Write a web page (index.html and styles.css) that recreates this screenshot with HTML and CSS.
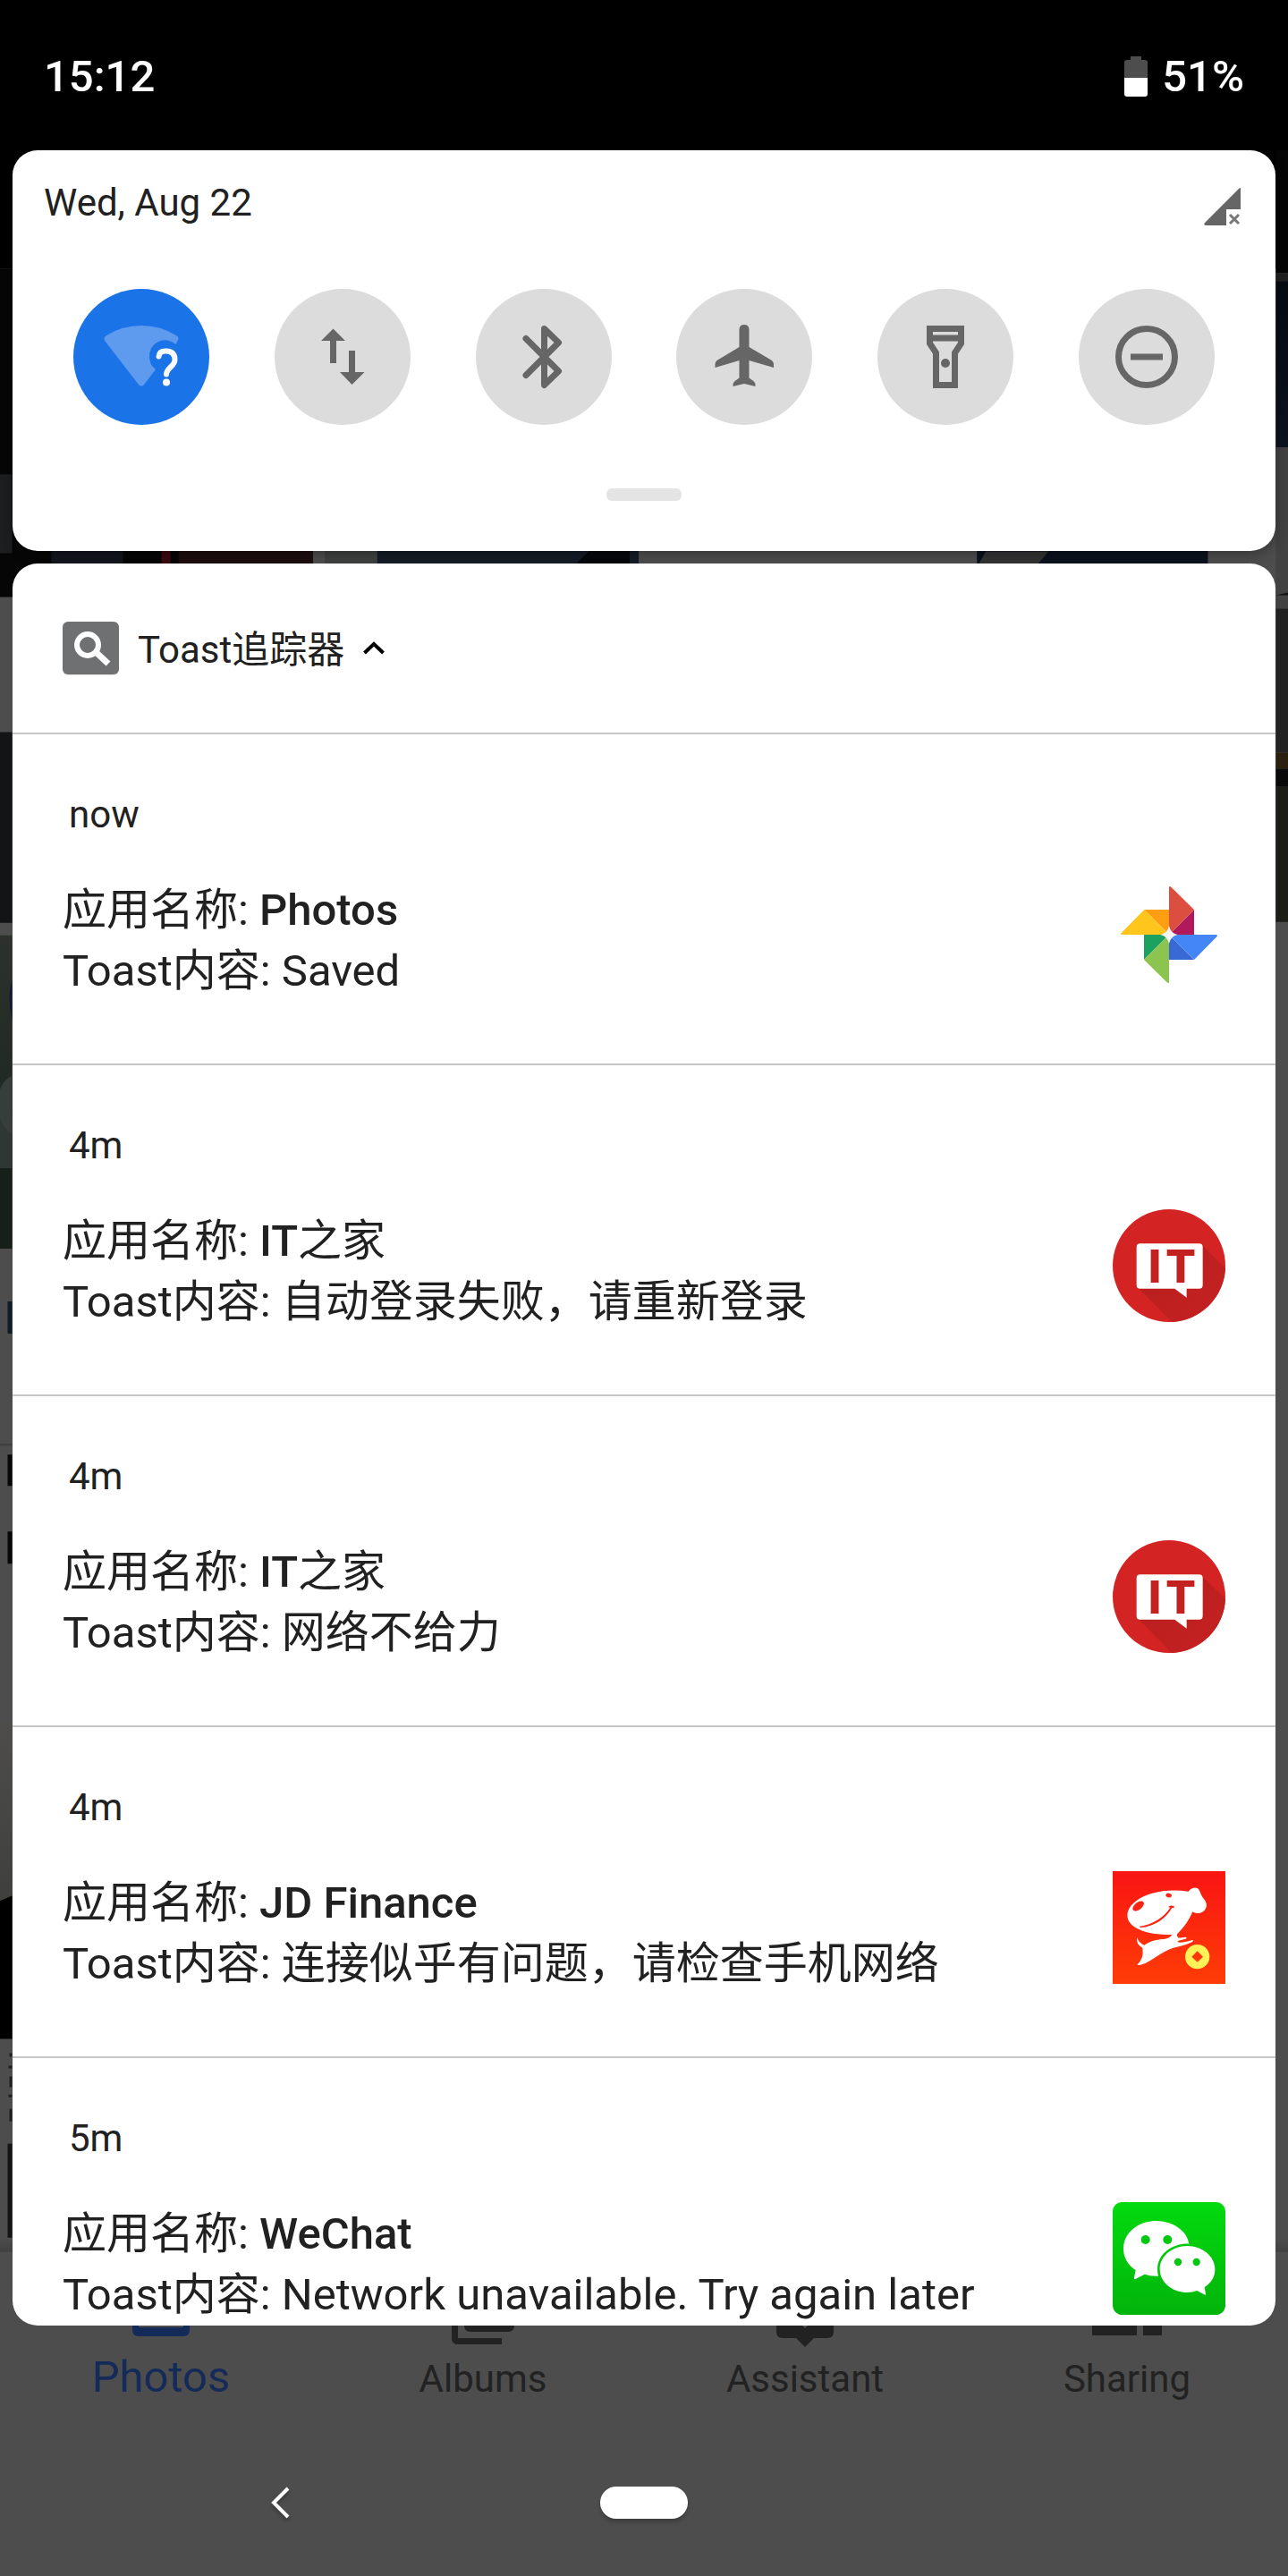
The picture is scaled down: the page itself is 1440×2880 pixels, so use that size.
FILE: index.html
```html
<!DOCTYPE html>
<html lang="zh-CN">
<head>
<meta charset="utf-8">
<meta name="viewport" content="width=device-width, initial-scale=1">
<title>Notifications</title>
<link rel="stylesheet" href="styles.css">
</head>
<body>
<div class="screen">
  <svg class="backdrop" viewBox="0 0 1440 2880" preserveAspectRatio="xMidYMin slice" aria-hidden="true">
    <defs>
      <linearGradient id="hill" x1="0" y1="0" x2="0" y2="1"><stop offset="0" stop-color="#2c322b"/><stop offset="1" stop-color="#1c2420"/></linearGradient>
      <linearGradient id="haze" x1="0" y1="0" x2="0" y2="1"><stop offset="0" stop-color="#4d4c49"/><stop offset="1" stop-color="#3f403c"/></linearGradient>
      <linearGradient id="sky" x1="0" y1="0" x2="0" y2="1"><stop offset="0" stop-color="#060a12"/><stop offset="1" stop-color="#0c1320"/></linearGradient>
      <linearGradient id="edge" x1="0" y1="0" x2="0" y2="1"><stop offset="0" stop-color="#4d4d4d"/><stop offset="1" stop-color="#404040"/></linearGradient>
    </defs>
    <path fill="#4d4d4d" d="M0 0h1440v2880H0z"/>
    <path fill="#000" d="M0 0h1440v300H0z"/>
    <path fill="#060606" d="M0 300h350v367H0z"/>
    <path fill="#1c1e20" d="M0 530h14v88H0z"/>
    <path fill="#12151c" d="M58 600h80v30H58z"/><path fill="#1d0e0e" d="M200 600h150v30H200z"/><path fill="#3c0810" d="M181 600h10v30h-10z"/>
    <path fill="#141c26" d="M364 300h350v330H364z"/><path fill="#3f4040" d="M364 600h58v30h-58z"/><path fill="#05070a" d="M644 630l20-20h40v20z"/>
    <path fill="#0b121e" d="M1092 600h258v30h-258z"/><path fill="#333" d="M1102 616h70l-12 14h-66z"/>
    <path fill="#050505" d="M1426 168h14v137h-14z"/>
    <path fill="#202020" d="M1426 305h14v9h-14z"/>
    <path fill="url(#sky)" d="M1426 314h14v186h-14z"/>
    <path fill="#424242" d="M1426 500h14v180h-14z"/><path fill="#111" d="M1426 665l14-3v3z"/>
    <path fill="#222" d="M1426 680h14v161h-14z"/><path fill="#2b200e" d="M1426 841h14v18h-14z"/><path fill="#090909" d="M1426 859h14v20h-14z"/><path fill="#1b1d16" d="M1426 879h14v151h-14z"/>
    <path fill="#121416" d="M0 818h14v213H0z"/>
    <path fill="url(#hill)" d="M0 1045h14v260H0z"/><path fill="#12183a" d="M14 1094q-6 20 0 46z"/><path fill="#373d3a" d="M0 1218q4-12 14-16v66q-12-8-14-20z"/>
    <path fill="#303633" d="M0 1250q6 12 14 18v37H0z"/><path fill="#162019" d="M0 1305h14v90H0z"/>
    <path fill="#0f1c2a" d="M9 1454h5v36H9z"/><path fill="#3f3f3f" d="M0 1613h14v2H0z"/><path fill="#080808" d="M9 1625h5v35H9zM9 1711h5v36H9z"/>
    <path fill="url(#haze)" d="M0 1925h14v200H0z"/><path fill="#000" d="M0 2124l14-6v160H0z"/>
    <path fill="#202020" d="M11 2294h3v4h-3zM10 2308h4v3h-4zM11 2320h3v12h-3zM10 2340h4v3h-4zM11 2356h3v14h-3z"/><path fill="#151515" d="M9 2395h5v118H9z"/>
    <path fill="url(#edge)" d="M0 2500h1440v16H0z"/>
  </svg>

  <header class="status">
    <time class="clock">15:12</time>
    <div class="battery">
      <svg width="26" height="45" viewBox="0 0 26 45" aria-hidden="true"><path fill="#4d4d4d" d="M7 0h12v4h4q3 0 3 3v17H0V7q0-3 3-3h4z"/><path fill="#fff" d="M0 24h26v18q0 3-3 3H3q-3 0-3-3z"/></svg>
      <span>51%</span>
    </div>
  </header>

  <main class="shade">
    <section class="card quick" aria-label="Quick settings">
      <div class="quick-head">
        <span class="date">Wed, Aug 22</span>
        <svg width="42" height="42" viewBox="0 0 42 42" aria-hidden="true"><path fill="#666" d="M41 0v24H25v18H3q-5 0-1-4L39 1q1-1 2-1z"/><path stroke="#777" stroke-width="3" d="M29 30l10 10M39 30L29 40"/></svg>
      </div>
      <div class="toggles">
        <button class="toggle toggle-on" type="button" aria-label="Wi-Fi">
          <svg viewBox="0 0 84 84"><path fill="#5e9bef" d="M1.500 24.500Q-1 20 3 18Q21 7 42 7T81 18Q85 20 82.500 24L80.500 28A17.500 17.500 0 0 0 51 42Q51 51 58 56L45 73Q42 76 39 73z"/><path fill="none" stroke="#fafafa" stroke-width="6" stroke-linecap="round" d="M61.500 41.500Q62 35 70 35.500Q79.500 36 79.500 45C79.500 53 70 54 70 61.500"/><circle cx="70" cy="70.500" r="4" fill="#fafafa"/></svg>
        </button>
        <button class="toggle" type="button" aria-label="Mobile data">
          <svg viewBox="0 0 84 84"><path fill="#666" d="M31.500 10.500L45 24H35v25h-7V24H18zM49 35h7v24h10.500L52.500 73 39 59h10z"/></svg>
        </button>
        <button class="toggle" type="button" aria-label="Bluetooth">
          <svg viewBox="0 0 84 84"><path fill="none" stroke="#666" stroke-width="7" stroke-linecap="round" stroke-linejoin="round" d="M22 21.500L58.500 58 42.500 73.500v-63L58.500 26 22 62.500"/></svg>
        </button>
        <button class="toggle" type="button" aria-label="Airplane mode">
          <svg viewBox="0 0 84 84"><path fill="#666" d="M36.500 11Q37 6 42 6t5.500 5v20L73 46q2 2 2 4v4L47.500 46v19.500l5.500 4q2 2 1.500 5.500L42 72l-12.500 3q-.5-3.500 1.500-5.500l5.500-4V46L9.500 54v-4q0-2 2-4L36.500 31z"/></svg>
        </button>
        <button class="toggle" type="button" aria-label="Flashlight">
          <svg viewBox="0 0 84 84"><path fill="none" stroke="#666" stroke-width="7" d="M24.500 10.500h35v16.500L52.500 37.500v36h-21v-36L24.500 27zM24.500 21h35"/><circle cx="42" cy="49" r="5" fill="#666"/></svg>
        </button>
        <button class="toggle" type="button" aria-label="Do not disturb">
          <svg viewBox="0 0 84 84"><circle cx="42" cy="42" r="31.500" fill="none" stroke="#666" stroke-width="7"/><path fill="#666" d="M24 38.500h36v7H24z"/></svg>
        </button>
      </div>
      <div class="handle"></div>
    </section>

    <section class="card feed" aria-label="Notifications">
      <div class="feed-head">
        <svg width="63" height="63" viewBox="0 0 63 63" aria-hidden="true"><rect y="3" width="63" height="59" rx="6" fill="#e2e2e2"/><rect y="2" width="63" height="59" rx="6" fill="#6f7072"/><circle cx="28" cy="28" r="12" fill="none" stroke="#fff" stroke-width="6"/><path stroke="#fff" stroke-width="7" d="M36 35l15 14"/></svg>
        <span class="source">Toast追踪器</span>
        <svg class="chevron" width="24" height="15" viewBox="0 0 24 15" aria-hidden="true"><path fill="none" stroke="#000" stroke-width="4" d="M1.500 13L12 3l10.500 10"/></svg>
      </div>
      <ul class="list">
        <li class="item">
          <time class="age">now</time>
          <div class="body">
            <p class="text">应用名称: <b>Photos</b><br>Toast内容: Saved</p>
            <svg class="app" viewBox="132 66 378 378" role="img" aria-label="Photos">
              <path fill="#fe9e12" d="M238 171h83v84z"/><path fill="#fec51c" d="M238 171l83 84H162q-5-2-1-6z"/>
              <path fill="#b01a5d" d="M405 171v84h-84z"/><path fill="#dc4f40" d="M321 255V95q3-4 7 0l77 76z"/>
              <path fill="#3869d5" d="M321 255l84 84h-84z"/><path fill="#4486f6" d="M321 255h160q4 3 0 7l-76 77z"/>
              <path fill="#1ba261" d="M237 255h84l-84 84z"/><path fill="#8dc44f" d="M321 255v160q-3 4-7 0l-77-76z"/>
              <path fill="#f4f4f4" d="M321 225q5 25 29 30-24 5-29 30-5-25-29-30 24-5 29-30z"/>
            </svg>
          </div>
        </li>
        <li class="item">
          <time class="age">4m</time>
          <div class="body">
            <p class="text">应用名称: <b>IT</b>之家<br>Toast内容: 自动登录失败，请重新登录</p>
            <svg class="app" viewBox="132 66 378 378" role="img" aria-label="IT之家"><use href="#it-logo"/></svg>
          </div>
        </li>
        <li class="item">
          <time class="age">4m</time>
          <div class="body">
            <p class="text">应用名称: <b>IT</b>之家<br>Toast内容: 网络不给力</p>
            <svg class="app" viewBox="132 66 378 378" role="img" aria-label="IT之家">
              <defs>
                <linearGradient id="it-shadow" x1="0" y1="0" x2="1" y2="1"><stop offset="0" stop-color="#b51d1d"/><stop offset="1" stop-color="#c72222"/></linearGradient>
                <g id="it-logo">
                  <circle cx="321" cy="255" r="189" fill="#d42323"/>
                  <path fill="url(#it-shadow)" d="M431 186l79 77A189 189 0 0 1 330 444L216 328z"/>
                  <path fill="#fff" d="M224 181h198q12 0 12 12v127q0 12-12 12h-42v30l-40-30H224q-12 0-12-12V193q0-12 12-12z"/>
                  <text class="it-mark" x="250 311" y="312">IT</text>
                </g>
              </defs>
              <use href="#it-logo"/>
            </svg>
          </div>
        </li>
        <li class="item">
          <time class="age">4m</time>
          <div class="body">
            <p class="text">应用名称: <b>JD Finance</b><br>Toast内容: 连接似乎有问题，请检查手机网络</p>
            <svg class="app" viewBox="132 66 378 378" role="img" aria-label="JD Finance">
              <defs><linearGradient id="jd" x1="0" y1="0" x2="0" y2="1"><stop offset="0" stop-color="#f91513"/><stop offset="1" stop-color="#ff3d06"/></linearGradient></defs>
              <path fill="url(#jd)" d="M132 66h378v378H132z"/>
              <path fill="#fff" d="M386 134C396 122 408 119 417 124C426 130 425 143 436 157C448 171 451 184 440 197C430 208 412 211 400 202C389 228 373 253 349 276Q345 283 353 290L375 287Q384 288 377 293L352 299Q348 304 355 305C373 305 386 301 399 297Q405 298 399 303C372 316 352 319 327 326C291 339 260 370 233 378Q220 382 214 380C234 361 234 344 232 323C217 316 211 302 214 288Q219 307 238 314C263 296 289 295 308 293Q324 290 331 279C287 278 245 276 212 257C181 240 173 214 190 187C216 148 291 121 386 134z"/>
              <g fill="#fb2412"><ellipse cx="218" cy="183" rx="22" ry="12" transform="rotate(-38 218 183)"/><ellipse cx="320" cy="147" rx="10" ry="7" transform="rotate(15 320 147)"/></g>
              <path fill="#fb2412" d="M222 251C266 246 306 219 325 188L318 186Q325 178 338 184V190L331 189C309 227 270 253 224 255z"/>
              <circle cx="416" cy="353" r="41" fill="#fff259"/><path fill="#ff3609" d="M416 334l19 19-19 18-19-18z"/>
            </svg>
          </div>
        </li>
        <li class="item">
          <time class="age">5m</time>
          <div class="body">
            <p class="text">应用名称: <b>WeChat</b><br>Toast内容: Network unavailable. Try again later</p>
            <svg class="app" viewBox="132 66 378 378" role="img" aria-label="WeChat">
              <defs><linearGradient id="wx" x1="0" y1="0" x2="0" y2="1"><stop offset="0" stop-color="#02da0e"/><stop offset="1" stop-color="#02b40b"/></linearGradient></defs>
              <rect x="132" y="66" width="378" height="378" rx="32" fill="url(#wx)"/>
              <path fill="#fff" d="M285 314Q258 315 239 308L207 325Q202 325 204 319L209 294C181 276 168 250 168 221C168 169 217 129 278 129C334 129 382 163 388 206C333 203 268 243 285 314z"/>
              <path fill="#fff" d="M382 213C433 213 475 248 475 291C475 317 462 337 440 352L444 374Q444 379 439 376L415 363Q400 369 382 369C331 369 290 334 290 291S331 213 382 213z"/>
              <g fill="#02c90d"><circle cx="242" cy="192" r="15"/><circle cx="316" cy="192" r="15"/><circle cx="351" cy="267" r="12.500"/><circle cx="413" cy="267" r="12.500"/></g>
            </svg>
          </div>
        </li>
      </ul>
    </section>
  </main>

  <nav class="tabs" aria-label="Photos sections">
    <a class="tab tab-current" href="#photos"><svg width="84" height="26" viewBox="0 0 84 26" aria-hidden="true"><path fill="currentColor" d="M10 0h7v2h50V0h7v5q0 7-7 7H17q-7 0-7-7z"/></svg>Photos</a>
    <a class="tab" href="#albums"><svg width="84" height="26" viewBox="0 0 84 26" aria-hidden="true"><path fill="currentColor" d="M21 0h56q0 7-7 7H28q-7 0-7-7zM7 0h7v14h49v7H14q-7 0-7-7z"/></svg><span>Albums</span></a>
    <a class="tab" href="#assistant"><svg width="84" height="26" viewBox="0 0 84 26" aria-hidden="true"><path fill="currentColor" d="M10 0h29l3 3 3-3h29v7q0 7-7 7H52L42 24 32 14H17q-7 0-7-7z"/></svg><span>Assistant</span></a>
    <a class="tab" href="#sharing"><svg width="84" height="26" viewBox="0 0 84 26" aria-hidden="true"><path fill="currentColor" d="M3 0h50v11H3zM60 0h21v11H60z"/></svg><span>Sharing</span></a>
  </nav>

  <footer class="system">
    <button class="back" type="button" aria-label="Back"><svg width="22" height="36" viewBox="0 0 22 36"><path fill="none" stroke="#fff" stroke-width="4" d="M20 2L4 18l16 16"/></svg></button>
    <button class="home" type="button" aria-label="Home"></button>
  </footer>
</div>
</body>
</html>
```
FILE: styles.css
```css
* { box-sizing: border-box; }

body {
  margin: 0;
  background: #4d4d4d;
  color: #212121;
  font-family: Roboto, "Noto Sans CJK SC", sans-serif;
  font-size: 42px;
  line-height: 50px;
}

button {
  border: 0;
  padding: 0;
  background: none;
}

svg { display: block; }

.screen {
  position: relative;
  min-height: 100vh;
  overflow: hidden;
}

.backdrop {
  position: absolute;
  inset: 0;
  width: 100%;
  height: 100%;
  z-index: -1;
}

.status {
  display: flex;
  justify-content: space-between;
  align-items: center;
  padding: 57px 49px 53px;
  background: #000;
  color: #fff;
  font-size: 49px;
  font-weight: 500;
  line-height: 58px;
}

.battery {
  display: flex;
  align-items: center;
  gap: 16px;
}

.battery svg { margin-bottom: 2px; }

.shade {
  display: flex;
  flex-direction: column;
  gap: 14px;
  padding: 0 14px;
}

.card {
  background: #fff;
  border-radius: 28px;
  overflow: hidden;
}

.quick {
  padding: 34px 0 56px;
  box-shadow: 0 4px 14px rgba(0, 0, 0, 0.3);
}

.quick-head {
  display: flex;
  justify-content: space-between;
  align-items: flex-end;
  padding: 0 38px 0 35px;
}

.toggles {
  display: flex;
  justify-content: space-between;
  padding: 71px 68px;
}

.toggle {
  display: grid;
  place-items: center;
  width: 152px;
  height: 152px;
  border-radius: 50%;
  background: #dcdcdc;
}

.toggle svg {
  width: 84px;
  height: 84px;
  overflow: visible;
}

.toggle-on { background: #1b73e8; }

.handle {
  width: 84px;
  height: 14px;
  margin: 0 auto;
  border-radius: 6px;
  background: #e4e4e4;
}

.feed-head {
  display: flex;
  align-items: center;
  gap: 21px;
  padding: 63px 56px;
}

.source { padding-top: 4px; }

.list {
  margin: 0;
  padding: 0;
  list-style: none;
}

.item {
  padding: 65px 56px 69px;
  border-top: 2px solid #c6c6c6;
}

.item:last-child { padding-bottom: 0; }

.age {
  display: block;
  margin-bottom: 46px;
  padding-left: 7px;
}

.body {
  display: flex;
  justify-content: space-between;
  align-items: flex-start;
}

.text {
  margin: 0;
  padding-top: 2px;
  font-size: 49px;
  line-height: 68px;
}

.text b { font-weight: 500; }

.app {
  flex: none;
  width: 126px;
  height: 126px;
}

.it-mark {
  font-family: Roboto, sans-serif;
  font-size: 155px;
  font-weight: 900;
  fill: #c32020;
}

.tabs {
  display: grid;
  grid-template-columns: repeat(4, 1fr);
}

.tab {
  display: block;
  color: #222;
  font-size: 49px;
  line-height: 60px;
  text-align: center;
  text-decoration: none;
}

.tab svg { margin: 0 auto 2px; }

.tab span { font-size: 42px; }

.tab-current { color: #142a58; }

.system {
  display: grid;
  grid-template-columns: 1fr auto 1fr;
  align-items: center;
  padding: 90px 0 66px;
}

.back { padding-left: 45%; }

.back svg { filter: drop-shadow(0 3px 2px rgba(0, 0, 0, 0.3)); }

.home {
  width: 98px;
  height: 36px;
  border-radius: 18px;
  background: #fff;
  box-shadow: 0 4px 4px rgba(0, 0, 0, 0.2);
}
```
